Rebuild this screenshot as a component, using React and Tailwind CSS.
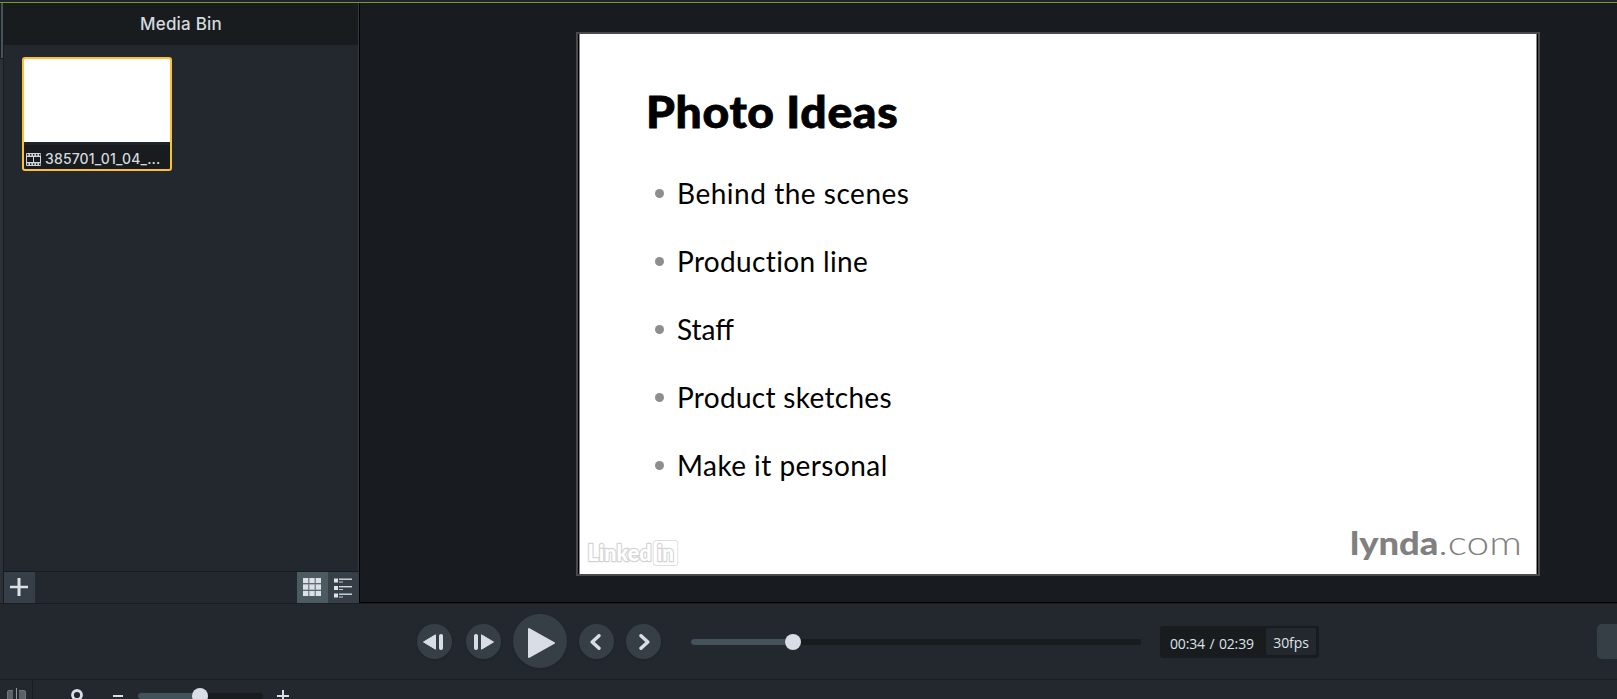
const BULLETS = [
  { text: 'Behind the scenes', cls: 'tracking-[0.52px]' },
  { text: 'Production line', cls: 'tracking-[0.35px]' },
  { text: 'Staff', cls: 'tracking-[0px]' },
  { text: 'Product sketches', cls: 'tracking-[0.3px]' },
  { text: 'Make it personal', cls: 'tracking-[0.45px]' },
];

function FilmIcon() {
  return (
    <svg width="15" height="13" viewBox="0 0 15 13" className="shrink-0 translate-y-px">
      <rect x="0" y="0" width="15" height="13" rx="1" fill="#d0d5d9" />
      <g fill="#181c1f">
        <rect x="1" y="4" width="6" height="5" />
        <rect x="8" y="4" width="6" height="5" />
        {[1, 4, 7, 10, 13].map((x) => (
          <g key={x}>
            <rect x={x} y="1" width="1.4" height="1.6" />
            <rect x={x} y="10.4" width="1.4" height="1.6" />
          </g>
        ))}
      </g>
    </svg>
  );
}

function MediaBin() {
  return (
    <section className="flex w-[355px] shrink-0 flex-col border-r border-[#343b41] bg-[#23282f]">
      <header className="flex h-[42px] items-center justify-center bg-[#181c1e] pt-[1px] font-['Inter',sans-serif] text-[17px] font-medium text-[#d4dade]">
        <span className="tracking-[0.2px]">Media Bin</span>
      </header>
      <div className="flex-1 px-[18px] pt-3">
        <div className="h-[114px] w-[150px] overflow-hidden rounded-[3px] border-2 border-[#fdc02f] bg-[#181c1e]">
          <div className="h-[83px] bg-white" />
          <div className="h-[3px] bg-[#1f242b]" />
          <div className="flex h-[24px] items-center gap-1 pt-[2px] pl-[2px] font-['Inter',sans-serif] text-[14px] font-medium whitespace-nowrap text-[#d4dade]">
            <FilmIcon />
            <span className="tracking-[0.15px]">385701_01_04_...</span>
          </div>
        </div>
      </div>
      <footer className="-mr-px flex h-8 border-t border-[#171b1e]">
        <button className="flex h-[31px] w-[31px] items-center justify-center bg-[#363f47] pr-px">
          <svg width="18" height="18" viewBox="0 0 18 18" stroke="#dde1e8" strokeWidth="3" className="mb-px">
            <path d="M9 0V18" />
            <path d="M0 9H18" strokeWidth="2.5" />
          </svg>
        </button>
        <div className="flex-1" />
        <button className="flex h-[31px] w-[31px] items-center justify-center bg-[#4b5b60] pr-px">
          <svg width="18" height="18" viewBox="0 0 18 18" className="mb-px">
            <rect width="18" height="18" fill="#7f8b91" />
            <path d="M0 5.5H18M0 12.5H18" stroke="#5b6b70" strokeWidth="1.2" />
            {[0, 6.5, 13].map((y) => [0, 6.5, 13].map((x) => (
              <rect key={`${x}-${y}`} x={x} y={y} width="5" height="5" fill="#dde1e8" />
            )))}
          </svg>
        </button>
        <button className="flex h-[31px] w-[31px] items-center justify-center bg-[#363f47] pr-px">
          <svg width="18" height="20" viewBox="0 0 18 20">
            {[0.5, 8, 15.5].map((y) => (
              <g key={y}>
                <rect x="0" y={y} width="4" height="4" fill="#dde1e8" />
                <rect x="5" y={y} width="13" height="1.4" fill="#d3d8de" />
                <rect x="5" y={y + 3} width="4" height="1" fill="#c2c8ce" />
              </g>
            ))}
          </svg>
        </button>
      </footer>
    </section>
  );
}

function Slide() {
  return (
    <div className="h-[544px] w-[964px] border-2 border-[#4a4a4a] bg-black px-px">
      <div className="flex h-full flex-col border-x border-[#8a8a8a] bg-white font-['Lato',sans-serif] text-black">
        <h1 className="mt-[49px] ml-[66px] h-[56px] origin-left scale-x-[1.05] text-[44px] leading-[56px] font-black tracking-[0.65px] whitespace-nowrap [-webkit-text-stroke:0.8px_black]">Photo Ideas</h1>
        <ul className="mt-[20px] ml-[75px]">
          {BULLETS.map((b) => (
            <li key={b.text} className="flex h-[68px] items-center gap-[13px] text-[28px] leading-none">
              <span className="mt-px h-[9px] w-[9px] rounded-full bg-[#8e8e8e]" />
              <span className={`${b.cls} whitespace-nowrap`}>{b.text}</span>
            </li>
          ))}
        </ul>
        <div className="flex flex-1 justify-between pt-5">
          <svg width="94" height="26" viewBox="0 0 94 26" className="mt-[21px] ml-[6px] shrink-0 overflow-visible">
            <g fill="white" stroke="#d4d4d4" strokeWidth="2.4" strokeLinejoin="round" paintOrder="stroke">
              <text x="1.5" y="20.5" fontFamily="Lato, sans-serif" fontSize="22" fontWeight="900" textLength="64" lengthAdjust="spacingAndGlyphs">Linked</text>
              <rect x="67.5" y="1" width="24" height="24" rx="2.5" strokeWidth="1.4" />
              <text x="71" y="20.5" fontFamily="Lato, sans-serif" fontSize="22" fontWeight="900" textLength="17" lengthAdjust="spacingAndGlyphs">in</text>
            </g>
          </svg>
          <div className="mt-[1px] mr-[14px] flex h-[44px] text-[33px] leading-[44px] whitespace-nowrap text-[#808080]">
            <span className="mr-[24px] origin-left scale-x-[1.1] font-black">lynda</span>
            <span className="origin-right scale-x-[1.23] font-light">.com</span>
          </div>
        </div>
      </div>
    </div>
  );
}

function RoundButton({ children }) {
  return (
    <button className="flex h-[35px] w-[35px] items-center justify-center rounded-full bg-[#363f46] shadow-sm">{children}</button>
  );
}

function Transport() {
  return (
    <div className="flex h-[77px] shrink-0 items-center border-t border-b border-[#1a1e22] bg-[#23282f] pl-[417px]">
      <RoundButton>
        <svg width="20" height="16" viewBox="0 0 20 16" fill="#d9dde6" stroke="#d9dde6" strokeLinejoin="round" className="mr-[3px]">
          <path d="M.5 8L12.5 .8V15.2Z" />
          <rect x="16.5" y=".5" width="3" height="15" rx="1" />
        </svg>
      </RoundButton>
      <div className="ml-[14px]" />
      <RoundButton>
        <svg width="20" height="16" viewBox="0 0 20 16" fill="#d9dde6" stroke="#d9dde6" strokeLinejoin="round">
          <path d="M19.5 8L7.5 .8V15.2Z" />
          <rect x=".5" y=".5" width="3" height="15" rx="1" />
        </svg>
      </RoundButton>
      <button className="mr-3 -mb-px ml-3 flex h-[54px] w-[54px] -translate-y-px items-center justify-center rounded-full bg-[#363f46] shadow-sm">
        <svg width="27" height="32" viewBox="0 0 27 32" fill="#d9dde6" stroke="#d9dde6" strokeWidth="2" strokeLinejoin="round" className="ml-[3px] translate-y-[2px]">
          <path d="M1 2V30L26 16Z" />
        </svg>
      </button>
      <RoundButton>
        <svg width="12" height="16" viewBox="0 0 12 16" fill="none" stroke="#d9dde6" strokeWidth="3.4" className="-ml-[3px]">
          <path d="M10 1.7L3.2 8L10 14.3" strokeLinecap="round" strokeLinejoin="round" />
        </svg>
      </RoundButton>
      <div className="ml-3" />
      <RoundButton>
        <svg width="12" height="16" viewBox="0 0 12 16" fill="none" stroke="#d9dde6" strokeWidth="3.4" className="ml-[3px]">
          <path d="M2 1.7L8.8 8L2 14.3" strokeLinecap="round" strokeLinejoin="round" />
        </svg>
      </RoundButton>
      <div className="ml-[30px] flex h-[6px] w-[450px] items-center rounded-full bg-[#181c1f]">
        <div className="h-[6px] w-[94px] rounded-l-full bg-[#435359]" />
        <div className="h-4 w-4 rounded-full bg-[#d9dde6]" />
      </div>
      <div className="ml-[19px] flex h-8 w-[159px] rounded-[3px] bg-[#181c1f] font-['Open_Sans',sans-serif] text-[14px] text-[#dce3e8]">
        <span className="w-[106px] pt-[2px] pl-[10px] leading-8 tracking-[-0.15px] [word-spacing:1px] whitespace-nowrap">00:34 / 02:39</span>
        <span className="mt-[2px] flex h-[27px] w-[50px] items-center justify-center rounded-[2px] bg-[#23282f] pt-[2px] tracking-[-0.1px]">30fps</span>
      </div>
      <div className="ml-auto h-[35px] w-5 rounded-l-[5px] bg-[#363f46]" />
    </div>
  );
}

function TimelineBar() {
  return (
    <div className="flex h-[19px] shrink-0 overflow-hidden bg-[#23282f]">
      <div className="w-[33px] border-r border-[#191d20] pt-2 pl-[7px]">
        <svg width="19" height="18" viewBox="0 0 19 18">
          <path d="M0 18V3.5L1.5 2H6V18ZM12 18V2H17L19 3.5V18Z" fill="#5c6067" />
          <path d="M.5 18V3.5L1.5 2.5H6M12 2.5H17L18.5 3.5V18" fill="none" stroke="#72767c" />
          <path d="M9.5 0V18" stroke="#92969c" />
        </svg>
      </div>
      <svg width="12" height="18" viewBox="0 0 12 18" fill="none" stroke="#d9dde6" strokeWidth="2.8" className="mt-[9px] ml-[38px] shrink-0">
        <circle cx="6" cy="6" r="4.5" />
        <path d="M3 10L0 14" />
      </svg>
      <div className="mt-[15px] ml-[30px] h-[2px] w-[10px] bg-[#d9dde6]" />
      <div className="mt-[8px] ml-[15px] flex h-4 w-[125px] shrink-0 items-center">
        <div className="h-[6px] w-[54px] rounded-l-full bg-[#435359]" />
        <div className="h-4 w-4 shrink-0 rounded-full bg-[#d9dde6]" />
        <div className="h-[6px] flex-1 rounded-r-full bg-[#181c1f]" />
      </div>
      <svg width="12" height="12" viewBox="0 0 12 12" stroke="#d9dde6" strokeWidth="2" className="mt-[10px] ml-[14px] shrink-0">
        <path d="M6 0V12M0 6H12" />
      </svg>
    </div>
  );
}

export default function App() {
  return (
    <div className="flex h-[699px] w-[1617px] flex-col overflow-hidden bg-[#23282f]">
      <div className="h-[3px] shrink-0 border-b border-[#769a25] bg-[#20252c]" />
      <div className="flex h-[600px] shrink-0">
        <aside className="w-1 shrink-0 border-r border-[#181c1f] bg-[#2b3137]">
          <div className="h-[56px] border-b border-l border-[#181c1f] bg-[#46535a]" />
        </aside>
        <MediaBin />
        <main className="flex-1 border-b border-l border-black bg-[#181c20] pt-[29px] pl-[216px]">
          <Slide />
        </main>
      </div>
      <Transport />
      <TimelineBar />
    </div>
  );
}
